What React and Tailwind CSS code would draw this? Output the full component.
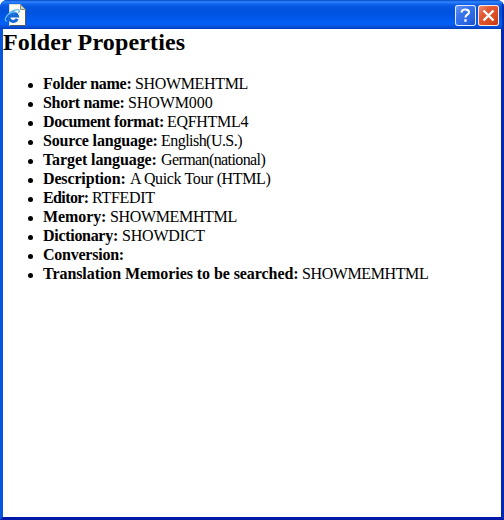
const rows = [
  { label: 'Folder name:', value: 'SHOWMEHTML', lw: 'w-[92px]', ls: 'tracking-[-0.27px]', vs: 'tracking-[-0.35px]' },
  { label: 'Short name:', value: 'SHOWM000', lw: 'w-[85px]', ls: 'tracking-[-0.3px]', vs: 'tracking-[-0.1px]' },
  { label: 'Document format:', value: 'EQFHTML4', lw: 'w-[124px]', ls: 'tracking-[-0.36px]', vs: 'tracking-[-0.3px]' },
  { label: 'Source language:', value: 'English(U.S.)', lw: 'w-[118px]', ls: 'tracking-[-0.17px]', vs: 'tracking-[-0.54px]' },
  { label: 'Target language:', value: 'German(national)', lw: 'w-[118px]', ls: 'tracking-[-0.1px]', vs: 'tracking-[-0.6px]' },
  { label: 'Description:', value: 'A Quick Tour (HTML)', lw: 'w-[87px]', ls: 'tracking-[-0.15px]', vs: 'tracking-[-0.37px]' },
  { label: 'Editor:', value: 'RTFEDIT', lw: 'w-[49px]', ls: 'tracking-[-0.6px]', vs: 'tracking-[-0.3px]' },
  { label: 'Memory:', value: 'SHOWMEMHTML', lw: 'w-[67px]', ls: 'tracking-[-0.1px]', vs: 'tracking-[-0.35px]' },
  { label: 'Dictionary:', value: 'SHOWDICT', lw: 'w-[79px]', ls: 'tracking-[-0.3px]', vs: 'tracking-[-0.2px]' },
  { label: 'Conversion:', value: '', lw: 'w-[85px]', ls: 'tracking-[-0.24px]', vs: '' },
  { label: 'Translation Memories to be searched:', value: 'SHOWMEMHTML', lw: 'w-[259px]', ls: 'tracking-[-0.07px]', vs: 'tracking-[-0.4px]' },
];

function PageIcon() {
  return (
    <svg width="23" height="23" viewBox="0 0 23 23" className="shrink-0">
      <path d="M5.5 .5H16.5L21.5 5.5V21.5H5.5Z" fill="#fdfcf2" stroke="#dddccf" />
      <path d="M21.5 6V21.5H6" fill="none" stroke="#4d5663" />
      <path d="M16.5 .5V5.5H21.5Z" fill="#d8d6c4" stroke="#77776d" strokeWidth=".8" />
      <path d="M13.2 14.8A4.3 4.3 0 1 1 13.4 12H6" fill="none" stroke="#1667d8" strokeWidth="3" />
      <path d="M5.2 10.6A4.3 4.3 0 0 1 11.5 8.9" fill="none" stroke="#54b4fa" strokeWidth="1.2" />
      <path d="M3.2 17.2C-1.5 17.5 3 9 10.5 6.2C14.5 4.7 16.5 6 14.5 9" fill="none" stroke="#63b8f5" strokeWidth="1.3" />
    </svg>
  );
}

function HelpIcon() {
  return (
    <svg width="21" height="21" viewBox="0 0 21 21">
      <path d="M6.8 7.6V6.4Q7.3 4.5 10.2 4.5Q14 4.5 14 7.2C14 9.6 10.4 9.6 10.4 12.6" fill="none" stroke="#fff" strokeWidth="2.1" />
      <path d="M9.3 14.3H11.6V16.7H9.3Z" fill="#fff" />
    </svg>
  );
}

function CloseIcon() {
  return (
    <svg width="21" height="21" viewBox="0 0 21 21">
      <path d="M5.5 5.5L15.5 15.5M15.5 5.5L5.5 15.5" stroke="#fff" strokeWidth="2.4" />
    </svg>
  );
}

export default function App() {
  return (
    <div className="h-[520px] w-[504px] bg-white">
      <div className="flex h-full flex-col overflow-hidden rounded-t-[7px] bg-[#0a4be0]">
        <header className="flex h-[29px] shrink-0 items-start justify-between bg-[linear-gradient(180deg,#0a50d0_0px,#2f86fb_2px,#1264ec_4px,#0455e0_7px,#0052de_13px,#025cf0_20px,#0460f6_24px,#0455e0_26px,#0240c0_29px)] pl-[4px] pr-[5px] pt-[4px] shadow-[inset_-2px_0_1px_#0030b0]">
          <PageIcon />
          <div className="flex gap-[2px] pt-px">
            <button className="h-[21px] w-[21px] rounded-[3px] bg-[linear-gradient(135deg,#6f9bf5,#3b74ec_35%,#2a66e4_70%,#1747c0)] shadow-[inset_0_0_0_1px_#dfe9ff]">
              <HelpIcon />
            </button>
            <button className="h-[21px] w-[21px] rounded-[3px] bg-[linear-gradient(135deg,#ef9478,#e25a35_35%,#d94a1f_70%,#b83210)] shadow-[inset_0_0_0_1px_#fbe9e4]">
              <CloseIcon />
            </button>
          </div>
        </header>
        <div className="flex min-h-0 flex-1 border-b-[3px] border-l-[3px] border-r-[3px] border-b-[#0018a8] border-l-[#0855dd] border-r-[#0027b8]">
          <main className="flex-1 bg-white font-['Liberation_Serif',serif] text-[16px] leading-[19px] text-black">
            <h1 className="text-[24px] font-bold leading-[27px] tracking-[0.15px]">Folder Properties</h1>
            <ul className="mt-[18px]">
              {rows.map((r) => (
                <li key={r.label} className="flex h-[19px] whitespace-pre pl-[25px]">
                  <span className="mt-[9px] h-[5px] w-[5px] shrink-0 rounded-full bg-black" />
                  <b className={`ml-[10px] shrink-0 ${r.lw} ${r.ls}`}>{r.label}</b>
                  <span className={r.vs}>{r.value}</span>
                </li>
              ))}
            </ul>
          </main>
        </div>
      </div>
    </div>
  );
}
